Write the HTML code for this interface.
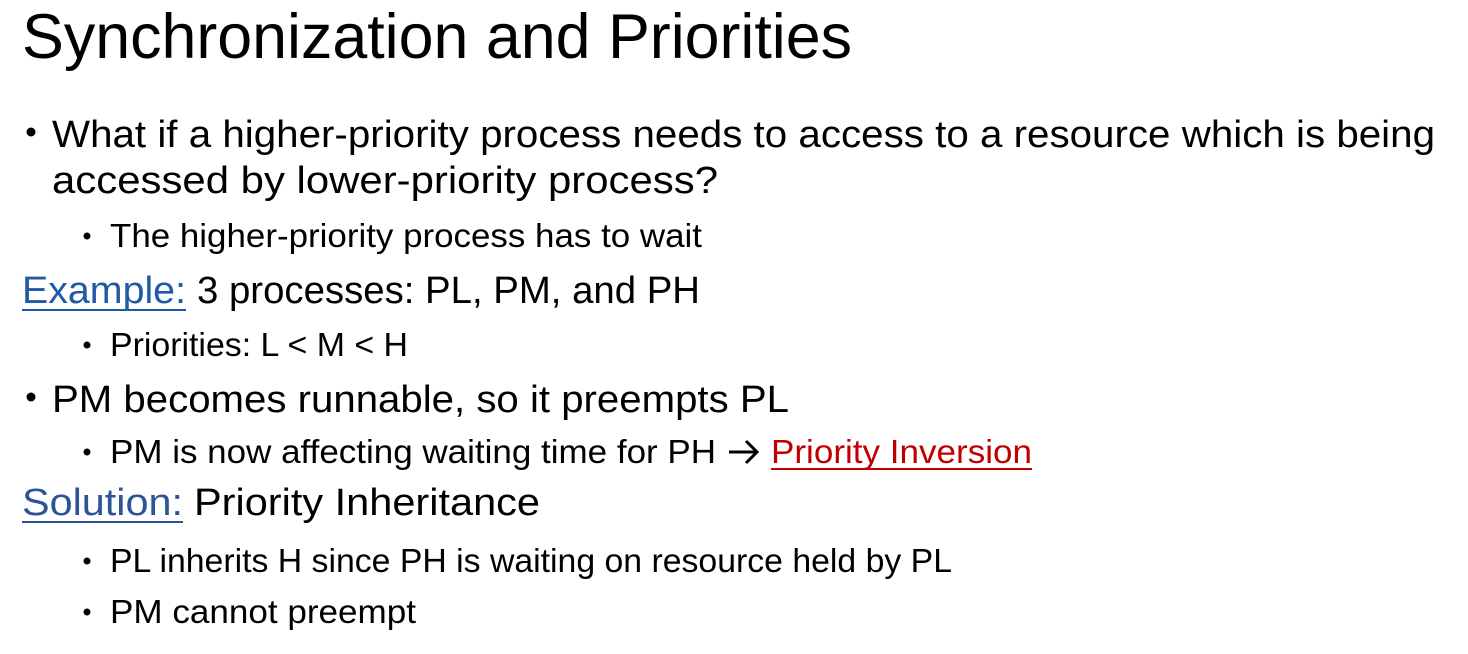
<!DOCTYPE html>
<html><head><meta charset="utf-8"><style>
html,body{margin:0;padding:0;background:#fff;}
svg{display:block;}
text{font-family:"Liberation Sans",sans-serif;fill:#000;}
</style></head><body>
<svg width="1468" height="654" xmlns="http://www.w3.org/2000/svg">
<text x="22" y="58" font-size="63" textLength="830" lengthAdjust="spacingAndGlyphs" style="font-weight:300">Synchronization and Priorities</text>

<circle cx="31" cy="132" r="4.5" fill="#000"/>
<text x="52" y="147" font-size="38" textLength="1383" lengthAdjust="spacingAndGlyphs">What if a higher-priority process needs to access to a resource which is being</text>
<text x="52" y="193" font-size="38" textLength="666" lengthAdjust="spacingAndGlyphs">accessed by lower-priority process?</text>

<circle cx="87" cy="236" r="3.5" fill="#000"/>
<text x="110" y="247" font-size="33" textLength="592" lengthAdjust="spacingAndGlyphs">The higher-priority process has to wait</text>

<text x="22" y="303" font-size="38" style="fill:#1f5aa6" textLength="164" lengthAdjust="spacingAndGlyphs">Example:</text>
<rect x="22" y="309" width="164" height="2" fill="#1f5aa6"/>
<text x="197" y="303" font-size="38" textLength="503" lengthAdjust="spacingAndGlyphs">3 processes: PL, PM, and PH</text>

<circle cx="87" cy="345" r="3.5" fill="#000"/>
<text x="110" y="356" font-size="33" textLength="298" lengthAdjust="spacingAndGlyphs">Priorities: L &lt; M &lt; H</text>

<circle cx="31" cy="397" r="4.5" fill="#000"/>
<text x="52" y="412" font-size="38" textLength="737" lengthAdjust="spacingAndGlyphs">PM becomes runnable, so it preempts PL</text>

<circle cx="87" cy="452" r="3.5" fill="#000"/>
<text x="110" y="463" font-size="33" textLength="606" lengthAdjust="spacingAndGlyphs">PM is now affecting waiting time for PH</text>
<path d="M729 452 H756 M746 441 L757 452 L746 463" stroke="#000" stroke-width="3" fill="none"/>
<text x="771" y="463" font-size="33" style="fill:#c00000" textLength="261" lengthAdjust="spacingAndGlyphs">Priority Inversion</text>
<rect x="771" y="468" width="261" height="2" fill="#c00000"/>

<text x="22" y="515" font-size="38" style="fill:#2f5496" textLength="161" lengthAdjust="spacingAndGlyphs">Solution:</text>
<rect x="22" y="521" width="161" height="2" fill="#2f5496"/>
<text x="194" y="515" font-size="38" textLength="346" lengthAdjust="spacingAndGlyphs">Priority Inheritance</text>

<circle cx="87" cy="561" r="3.5" fill="#000"/>
<text x="110" y="572" font-size="33" textLength="842" lengthAdjust="spacingAndGlyphs">PL inherits H since PH is waiting on resource held by PL</text>

<circle cx="87" cy="612" r="3.5" fill="#000"/>
<text x="110" y="623" font-size="33" textLength="306" lengthAdjust="spacingAndGlyphs">PM cannot preempt</text>
</svg>
</body></html>
